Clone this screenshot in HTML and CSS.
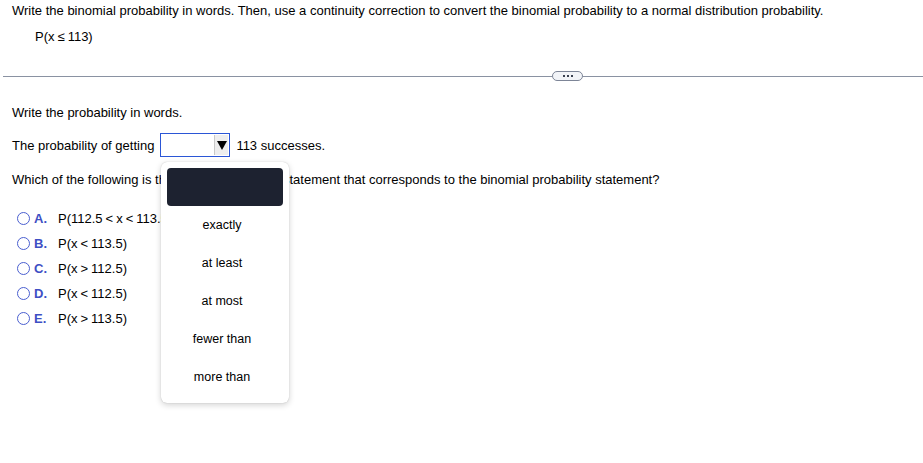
FILE: index.html
```html
<!DOCTYPE html>
<html>
<head>
<meta charset="utf-8">
<link rel="stylesheet" href="styles.css">
</head>
<body>
<div class="page">
  <p class="intro">Write the binomial probability in words. Then, use a continuity correction to convert the binomial probability to a normal distribution probability.</p>
  <p class="expr">P(x<span class="op">≤</span>113)</p>
  <div class="divider">
    <span class="line left"></span>
    <span class="more"><i></i><i></i><i></i></span>
    <span class="line"></span>
  </div>
  <p class="q1">Write the probability in words.</p>
  <div class="sentence">
    <span>The probability of getting</span>
    <span class="select"><span class="arrow"></span></span>
    <span>113 successes.</span>
    <div class="menu">
      <div class="menu-sel"></div>
      <div class="menu-item">exactly</div>
      <div class="menu-item">at least</div>
      <div class="menu-item">at most</div>
      <div class="menu-item">fewer than</div>
      <div class="menu-item">more than</div>
    </div>
  </div>
  <p class="q2">Which of the following is the normal probability statement that corresponds to the binomial probability statement?</p>
  <ul class="options">
    <li><span class="radio"></span><b>A.</b><span>P(112.5<span class="op">&lt;</span>x<span class="op">&lt;</span>113.5)</span></li>
    <li><span class="radio"></span><b>B.</b><span>P(x<span class="op">&lt;</span>113.5)</span></li>
    <li><span class="radio"></span><b>C.</b><span>P(x<span class="op">&gt;</span>112.5)</span></li>
    <li><span class="radio"></span><b>D.</b><span>P(x<span class="op">&lt;</span>112.5)</span></li>
    <li><span class="radio"></span><b>E.</b><span>P(x<span class="op">&gt;</span>113.5)</span></li>
  </ul>
</div>
</body>
</html>
```

FILE: styles.css
```css
* { box-sizing: border-box; }
html, body { margin: 0; padding: 0; background: #fff; }
body {
  font-family: "Liberation Sans", Arial, sans-serif;
  font-size: 13px;
  color: #000;
  min-height: 463px;
}
.page { padding: 0 0 0 12px; min-height: 463px; }
p { margin: 0; }
.intro { padding-top: 3px; line-height: 15px; }
.expr { margin-top: 11px; padding-left: 23px; line-height: 15px; }
.op { padding: 0 3px; }
.divider {
  display: flex;
  align-items: center;
  margin: 27px 0 0 -9px;
  height: 10px;
}
.line { flex: 1; height: 1px; background: #8a92a2; }
.line.left { flex: 0 0 549px; }
.more {
  width: 31px; height: 10px;
  border: 1px solid #7d8597;
  border-radius: 5px;
  background: #f2f4f8;
  display: flex; align-items: center; justify-content: center; gap: 2px;
}
.more i { width: 2px; height: 2px; background: #3a4150; display: block; }
.q1 { margin-top: 24px; line-height: 15px; }
.sentence {
  position: relative;
  display: flex; align-items: center; gap: 6px;
  margin-top: 13px;
  height: 24px;
}
.select {
  width: 70px; height: 24px;
  border: 1px solid #2b56d6;
  display: flex; justify-content: flex-end; align-items: center;
  padding-right: 1px;
}
.arrow {
  width: 14px; height: 20px;
  background: #eeeeee;
  border-left: 1px solid #c9c9c9;
  position: relative;
}
.arrow::after {
  content: ""; position: absolute; left: 2px; top: 6px;
  border-left: 5px solid transparent; border-right: 5px solid transparent;
  border-top: 9px solid #000;
}
.menu {
  position: absolute; left: 149px; top: 29px;
  width: 128px; height: 241px;
  background: #fff;
  border-radius: 6px;
  box-shadow: 0 0 1px rgba(0,0,0,.25), 0 2px 6px rgba(0,0,0,.18);
  padding: 6px;
  z-index: 5;
}
.menu-sel { height: 38px; background: #1d2230; border-radius: 4px; }
.menu-item { height: 38px; line-height: 38px; text-align: center; font-size: 12.5px; padding-right: 6px; }
.q2 { margin-top: 15px; line-height: 15px; }
.options { list-style: none; margin: 19px 0 0 5px; padding: 0; }
.options li { display: flex; align-items: center; height: 25px; }
.radio {
  width: 13px; height: 13px; border-radius: 50%;
  border: 1.3px solid #4a5fd0; margin-right: 4px;
}
.options b { color: #3e4fc4; width: 24px; }
```
